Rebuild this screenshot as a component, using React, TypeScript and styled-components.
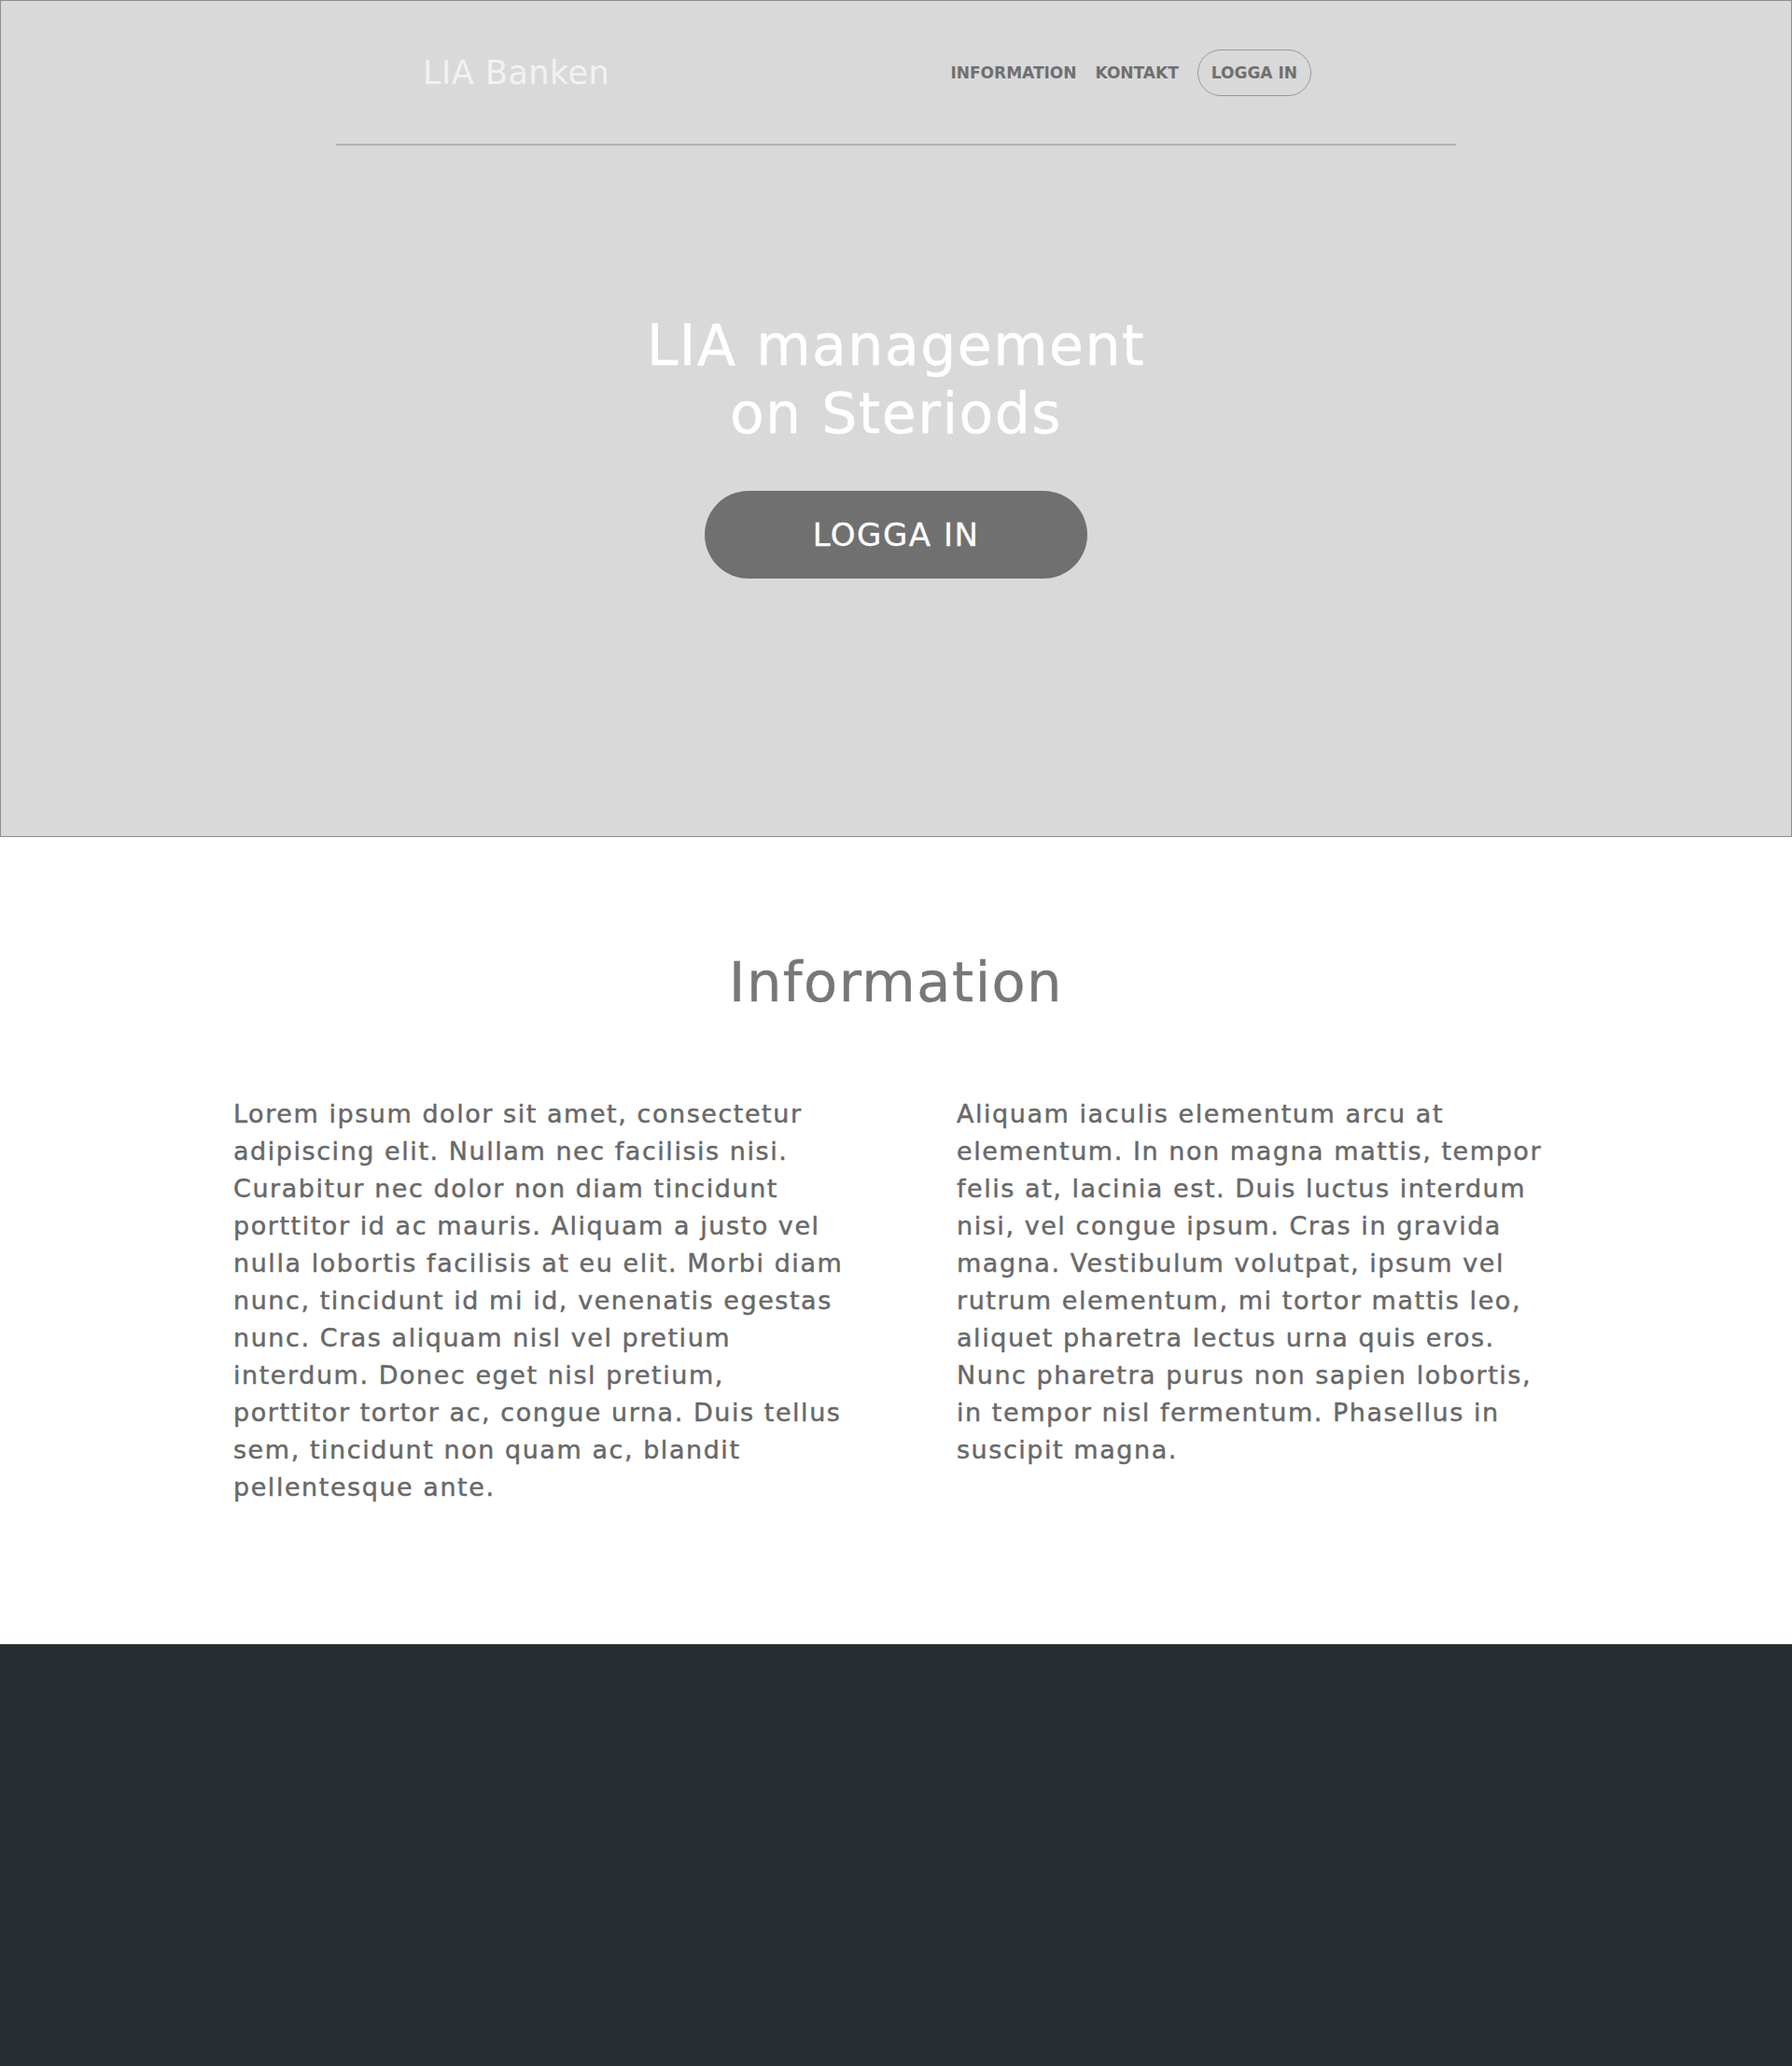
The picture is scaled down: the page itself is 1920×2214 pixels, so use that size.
import React from "react";
import styled, { createGlobalStyle } from "styled-components";

const GlobalStyle = createGlobalStyle`
  html, body {
    margin: 0;
    padding: 0;
    background: #fff;
    font-family: "DejaVu Sans", "Liberation Sans", sans-serif;
  }
`;

const Hero = styled.section`
  height: 897px;
  box-sizing: border-box;
  background: #d9d9d9;
  border: 1px solid #8e8e8e;
  display: flex;
  flex-direction: column;
  align-items: center;
`;

const Header = styled.header`
  width: 1200px;
  height: 155px;
  box-sizing: border-box;
  border-bottom: 2px solid #b3b3b3;
  padding: 0 155px 0 93px;
  display: flex;
  align-items: center;
  justify-content: space-between;
`;

const Logo = styled.div`
  font-size: 35px;
  letter-spacing: 0.5px;
  color: #f2f2f2;
`;

const Nav = styled.nav`
  display: flex;
  align-items: center;
  gap: 20px;
`;

const NavLink = styled.a<{ $outlined?: boolean }>`
  font-size: 17px;
  font-weight: bold;
  color: #6f6f6f;
  text-decoration: none;
  ${(p) =>
    p.$outlined &&
    `
    border: 1px solid #999;
    border-radius: 25px;
    height: 48px;
    padding: 0 14px;
    display: flex;
    align-items: center;
  `}
`;

const HeroBody = styled.div`
  display: flex;
  flex-direction: column;
  align-items: center;
  padding-top: 178px;
`;

const Title = styled.h1`
  margin: 0;
  font-size: 60px;
  font-weight: normal;
  letter-spacing: 1.5px;
  line-height: 73px;
  color: #fff;
  -webkit-text-stroke: 0.4px #fff;
  text-align: center;
`;

const BigButton = styled.button`
  margin-top: 46px;
  width: 410px;
  height: 94px;
  border: none;
  border-radius: 47px;
  background: #707070;
  color: #fff;
  font-family: inherit;
  font-size: 34px;
  letter-spacing: 1.5px;
  -webkit-text-stroke: 0.3px #fff;
  cursor: pointer;
`;

const Info = styled.section`
  height: 865px;
  box-sizing: border-box;
  padding-top: 120px;
  display: flex;
  flex-direction: column;
  align-items: center;
`;

const InfoHeading = styled.h2`
  margin: 0;
  font-size: 59px;
  font-weight: normal;
  letter-spacing: 1.5px;
  color: #777;
  -webkit-text-stroke: 0.4px #777;
  line-height: 72px;
`;

const Columns = styled.div`
  margin-top: 85px;
  display: grid;
  grid-template-columns: 645px 645px;
  column-gap: 130px;
`;

const Para = styled.p`
  margin: 0;
  font-size: 27px;
  letter-spacing: 1.55px;
  line-height: 40px;
  color: #686868;
  -webkit-text-stroke: 0.45px #686868;
`;

const Line = styled.span`
  display: block;
  white-space: nowrap;
`;

const Footer = styled.footer`
  height: 452px;
  background: #272e31;
`;

const left = [
  "Lorem ipsum dolor sit amet, consectetur",
  "adipiscing elit. Nullam nec facilisis nisi.",
  "Curabitur nec dolor non diam tincidunt",
  "porttitor id ac mauris. Aliquam a justo vel",
  "nulla lobortis facilisis at eu elit. Morbi diam",
  "nunc, tincidunt id mi id, venenatis egestas",
  "nunc. Cras aliquam nisl vel pretium",
  "interdum. Donec eget nisl pretium,",
  "porttitor tortor ac, congue urna. Duis tellus",
  "sem, tincidunt non quam ac, blandit",
  "pellentesque ante.",
];

const right = [
  "Aliquam iaculis elementum arcu at",
  "elementum. In non magna mattis, tempor",
  "felis at, lacinia est. Duis luctus interdum",
  "nisi, vel congue ipsum. Cras in gravida",
  "magna. Vestibulum volutpat, ipsum vel",
  "rutrum elementum, mi tortor mattis leo,",
  "aliquet pharetra lectus urna quis eros.",
  "Nunc pharetra purus non sapien lobortis,",
  "in tempor nisl fermentum. Phasellus in",
  "suscipit magna.",
];

export default function App() {
  return (
    <>
      <GlobalStyle />
      <Hero>
        <Header>
          <Logo>LIA Banken</Logo>
          <Nav>
            <NavLink href="#">INFORMATION</NavLink>
            <NavLink href="#">KONTAKT</NavLink>
            <NavLink href="#" $outlined>
              LOGGA IN
            </NavLink>
          </Nav>
        </Header>
        <HeroBody>
          <Title>
            LIA management
            <br />
            on Steriods
          </Title>
          <BigButton>LOGGA IN</BigButton>
        </HeroBody>
      </Hero>
      <Info>
        <InfoHeading>Information</InfoHeading>
        <Columns>
          <Para>
            {left.map((l) => (
              <Line key={l}>{l}</Line>
            ))}
          </Para>
          <Para>
            {right.map((l) => (
              <Line key={l}>{l}</Line>
            ))}
          </Para>
        </Columns>
      </Info>
      <Footer />
    </>
  );
}
